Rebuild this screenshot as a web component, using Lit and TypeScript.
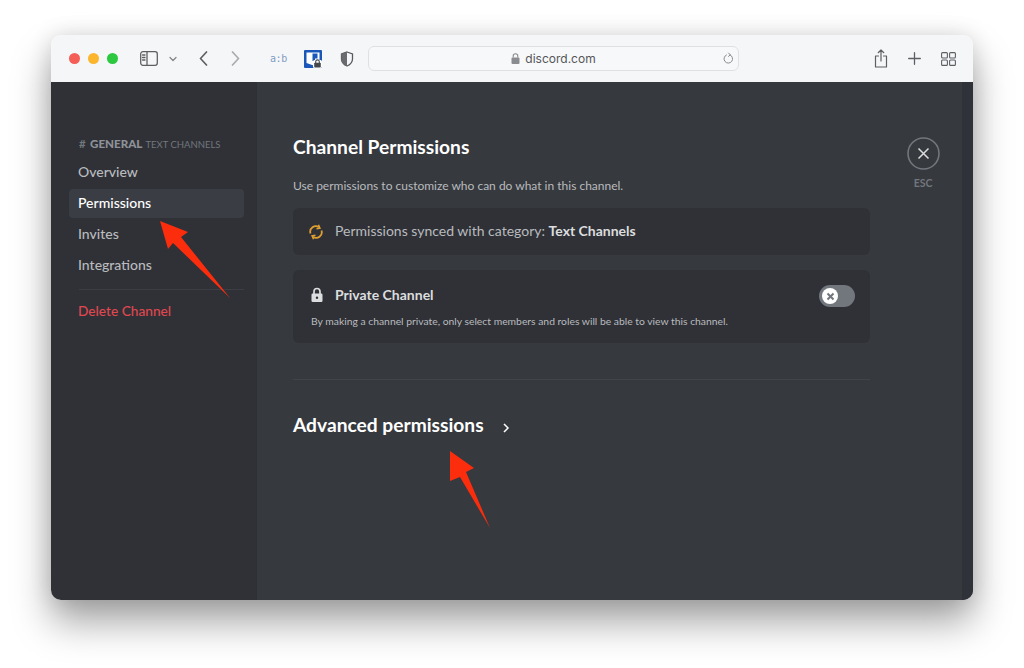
import { LitElement, html, css } from "lit";
import { customElement } from "lit/decorators.js";

@customElement("app-root")
export class AppRoot extends LitElement {
  static styles = css`
    :host { display: block; width: 1024px; height: 668px; overflow: hidden; background: #fff; font-family: "Lato", "Open Sans", sans-serif; position: relative; }
    .page { padding: 35px 51px 68px; height: 668px; box-sizing: border-box; }
    .win { height: 565px; border-radius: 10px; display: flex; flex-direction: column; overflow: hidden; box-shadow: 0 22px 38px rgba(0,0,0,.36), 0 0 22px rgba(0,0,0,.12); }
    .bar { height: 47px; flex: none; background: #f5f6f8; display: flex; align-items: center; box-sizing: border-box; padding: 0 0 0 18px; }
    .lights { display: flex; gap: 8px; width: 71px; flex: none; }
    .lights i { width: 11px; height: 11px; border-radius: 50%; }
    .r { background: #f45e57; } .y { background: #fbb62e; } .g { background: #2bc840; }
    svg { display: block; flex: none; }
    .ico { fill: none; stroke: #5e5f62; stroke-width: 1.3; stroke-linecap: round; stroke-linejoin: round; }
    .ico.light { stroke: #a9abae; }
    .chev { margin-left: 11px; stroke: #85868a; }
    .back { margin-left: 22px; }
    .fwd { margin-left: 23px; }
    .ab { margin-left: 30px; width: 20px; font: 10px "DejaVu Sans Mono", monospace; color: #7f9cc4; letter-spacing: -.4px; }
    .blue { margin-left: 14px; }
    .shield { margin-left: 18px; }
    .url { margin-left: 14px; width: 371px; height: 25px; box-sizing: border-box; border: 1px solid #dfe0e3; border-radius: 6px; background: #f7f8f9; display: flex; align-items: center; position: relative; justify-content: center; gap: 5px; font-family: "Inter", sans-serif; font-size: 12px; color: #55565a; }
    .reload { position: absolute; right: 3px; top: 5px; }
    .right { margin-left: 135px; }
    .plus { margin-left: 20px; }
    .grid { margin-left: 20px; }
    .body { flex: 1; display: flex; min-height: 0; }
    .side { width: 206px; flex: none; background: #2f3137; box-sizing: border-box; padding: 54px 13px 0 18px; }
    .head { padding-left: 10px; height: 16px; font-size: 9.5px; line-height: 16px; color: #72767d; white-space: nowrap; display: flex; gap: 3px; align-items: baseline; }
    .hash { font-size: 11.5px; font-weight: 700; width: 8px; margin-right: 0; flex: none; }
    .head b { font-size: 11.6px; font-weight: 900; color: #8e9297; }
    .nav { height: 29px; margin-top: 2px; line-height: 29px; padding-left: 9px; border-radius: 4px; font-size: 14px; color: #b9bbbe; font-weight: 500; white-space: nowrap; }
    .nav.first { margin-top: 5px; }
    .nav.active { background: #3a3d44; color: #fff; margin-top: 3px; margin-bottom: -1px; line-height: 27px; }
    .sep { height: 1px; background: #3b3e44; margin: 10px 0 6px 10px; }
    .del { color: #e0474f; font-size: 13.7px; }
    .main { flex: 1; background: #36393e; display: flex; padding-left: 36px; min-width: 0; }
    .content { width: 577px; flex: none; padding-top: 51px; box-sizing: border-box; }
    h1 { margin: 0; font-size: 19.2px; font-weight: 700; line-height: 28px; color: #fff; white-space: nowrap; }
    .sub { margin-top: 17px; font-size: 12px; line-height: 16px; color: #b9bbbe; }
    .card { background: #2f3137; border-radius: 6px; box-sizing: border-box; padding: 0 15px; }
    .sync { margin-top: 14px; height: 47px; display: flex; align-items: center; gap: 11px; font-size: 14px; line-height: 16px; color: #b9bbbe; white-space: nowrap; }
    .sync span { margin-top: -2px; }
    .sync b { color: #dcddde; font-weight: 700; }
    .priv { margin-top: 15px; height: 73px; padding-top: 14px; position: relative; }
    .row { display: flex; align-items: center; gap: 11px; font-size: 14px; font-weight: 700; color: #dcddde; height: 22px; padding-left: 2px; }
    .row span { margin-top: -2px; }
    .desc { margin-top: 8px; padding-left: 3px; font-size: 10.35px; line-height: 14px; color: #b9bbbe; white-space: nowrap; }
    .toggle { position: absolute; right: 15px; top: 15px; width: 36px; height: 22px; border-radius: 11px; background: #72767d; }
    .knob { position: absolute; left: 3px; top: 3px; width: 16px; height: 16px; border-radius: 50%; background: #fff; display: flex; align-items: center; justify-content: center; }
    .div { height: 1px; background: #40444b; margin-top: 36px; }
    .adv { margin-top: 32px; display: flex; align-items: center; gap: 19px; font-size: 19.2px; font-weight: 700; line-height: 26px; color: #fff; white-space: nowrap; }
    .adv svg { margin-top: 5px; }
    .closecol { width: 56px; margin-left: 25px; flex: none; padding-top: 55px; display: flex; flex-direction: column; align-items: center; }
    .esc { margin-top: 6px; font-size: 10.5px; font-weight: 700; color: #72767d; line-height: 14px; }
    .scroll { width: 11px; margin-left: auto; flex: none; background: #2f3238; }
    .arrows { position: absolute; left: 0; top: 0; pointer-events: none; }
  `;

  render() {
    return html`
      <div class="page">
        <div class="win">
          <div class="bar">
            <div class="lights"><i class="r"></i><i class="y"></i><i class="g"></i></div>
            <svg class="ico" width="18" height="15" viewBox="0 0 18 15"><rect x=".7" y=".7" width="16.6" height="13.6" rx="2.2"/><path d="M7 .7v13.6M2.6 4h2.4M2.6 6.5h2.4M2.6 9h2.4"/></svg>
            <svg class="ico chev" width="8" height="6" viewBox="0 0 8 6"><path d="M1 1.500l3 3 3-3"/></svg>
            <svg class="ico back" width="9" height="15" viewBox="0 0 9 15" style="stroke-width:1.7"><path d="M7.500 1L1.500 7.500l6 6.500"/></svg>
            <svg class="ico light fwd" width="9" height="15" viewBox="0 0 9 15" style="stroke-width:1.7"><path d="M1.500 1l6 6.500-6 6.500"/></svg>
            <span class="ab">a:b</span>
            <svg class="blue" width="18" height="18" viewBox="0 0 18 18"><rect width="18" height="18" rx="1" fill="#1b57b8"/><path d="M2.500 2.500H15.500V10L9.500 15.500L2.500 13Z" fill="#fff"/><path d="M8.500 3.500H13.500V8.500H11V11H8.500Z" fill="#1b57b8"/><rect x="9" y="10" width="9" height="8" rx="1.500" fill="#fff"/><rect x="10.200" y="12.800" width="6.600" height="4.600" rx=".7" fill="#47484b"/><path d="M11.700 13v-1.300a1.800 1.800 0 013.600 0V13" fill="none" stroke="#47484b" stroke-width="1.100"/></svg>
            <svg class="shield" width="14" height="16" viewBox="0 0 14 16"><path d="M7 1l5.500 2v5c0 3.500-2.500 5.700-5.500 7-3-1.300-5.500-3.500-5.500-7V3z" fill="none" stroke="#58595c" stroke-width="1.300"/><path d="M7 1L1.500 3v5c0 3.500 2.500 5.700 5.500 7z" fill="#6a6b6e"/></svg>
            <div class="url">
              <svg width="9" height="11" viewBox="0 0 9 11"><rect x=".5" y="4.500" width="8" height="6.500" rx="1" fill="#8b8c90"/><path d="M2.200 4.500V3a2.300 2.300 0 014.600 0v1.500" fill="none" stroke="#8b8c90" stroke-width="1.100"/></svg>
              <span>discord.com</span>
              <svg class="reload ico" style="stroke:#8a8b8e;stroke-width:1" width="13" height="13" viewBox="0 0 13 13"><path d="M8 2.800a4.300 4.300 0 11-3.600.1M6.500 1l1.800 1.800-1.800 1.600"/></svg>
            </div>
            <svg class="ico right" width="14" height="19" viewBox="0 0 14 19" style="stroke-width:1.200"><path d="M4.500 7H1.500v11h11V7H9.500M7 12V1M4.200 3.700L7 1l2.800 2.700"/></svg>
            <svg class="ico plus" width="13" height="13" viewBox="0 0 13 13"><path d="M6.500 .7v11.600M.7 6.500h11.600"/></svg>
            <svg class="ico grid" width="15" height="14" viewBox="0 0 15 14" style="stroke-width:1.100"><rect x=".6" y=".6" width="5.800" height="5.400" rx="1"/><rect x="8.600" y=".6" width="5.800" height="5.400" rx="1"/><rect x=".6" y="8" width="5.800" height="5.400" rx="1"/><rect x="8.600" y="8" width="5.800" height="5.400" rx="1"/></svg>
          </div>
          <div class="body">
            <div class="side">
              <div class="head"><span class="hash">#</span><b>GENERAL</b><span>TEXT CHANNELS</span></div>
              <div class="nav first">Overview</div>
              <div class="nav active">Permissions</div>
              <div class="nav">Invites</div>
              <div class="nav">Integrations</div>
              <div class="sep"></div>
              <div class="nav del">Delete Channel</div>
            </div>
            <div class="main">
              <div class="content">
                <h1>Channel Permissions</h1>
                <div class="sub">Use permissions to customize who can do what in this channel.</div>
                <div class="card sync">
                  <svg width="16" height="16" viewBox="0 0 16 16" fill="none" stroke="#e0a030" stroke-width="1.800"><path d="M2.500 9.500A5.600 5.600 0 0111 3.200M13.500 6.500A5.600 5.600 0 015 12.800"/><path d="M10.500 .8l1.500 3.400-3.500.6M5.500 15.200L4 11.800l3.500-.6" stroke-width="1.400"/></svg>
                  <span>Permissions synced with category: <b>Text Channels</b></span>
                </div>
                <div class="card priv">
                  <div class="row">
                    <svg width="14" height="16" viewBox="0 0 14 16"><rect x="1.500" y="6.500" width="11" height="8.500" rx="1.200" fill="#dcddde"/><path d="M4 7V4.500a3 3 0 016 0V7" fill="none" stroke="#dcddde" stroke-width="1.700"/><circle cx="7" cy="10.700" r="1.200" fill="#2f3137"/></svg>
                    <span>Private Channel</span>
                  </div>
                  <div class="desc">By making a channel private, only select members and roles will be able to view this channel.</div>
                  <div class="toggle"><div class="knob"><svg width="9" height="9" viewBox="0 0 9 9"><path d="M1.500 1.500l6 6M7.500 1.500l-6 6" stroke="#72767d" stroke-width="2"/></svg></div></div>
                </div>
                <div class="div"></div>
                <div class="adv"><span>Advanced permissions</span><svg width="7" height="10" viewBox="0 0 7 10" fill="none" stroke="#fff" stroke-width="1.500"><path d="M1 1l4 4-4 4"/></svg></div>
              </div>
              <div class="closecol">
                <svg width="33" height="33" viewBox="0 0 33 33" fill="none"><circle cx="16.500" cy="16.500" r="15.500" stroke="#72767d" stroke-width="1.600"/><path d="M11.500 11.500l10 10M21.500 11.500l-10 10" stroke="#dcddde" stroke-width="1.500"/></svg>
                <div class="esc">ESC</div>
              </div>
              <div class="scroll"></div>
            </div>
          </div>
        </div>
      </div>
      <svg class="arrows" width="1024" height="668" viewBox="0 0 1024 668">
        <path fill="#fb2d0d" d="M160 221L188 232L181 237L230 298L173 243L168 249Z"/>
        <path fill="#fb2d0d" d="M450 451L474 468L466 472L490 528L460 477L450 481Z"/>
      </svg>
    `;
  }
}
